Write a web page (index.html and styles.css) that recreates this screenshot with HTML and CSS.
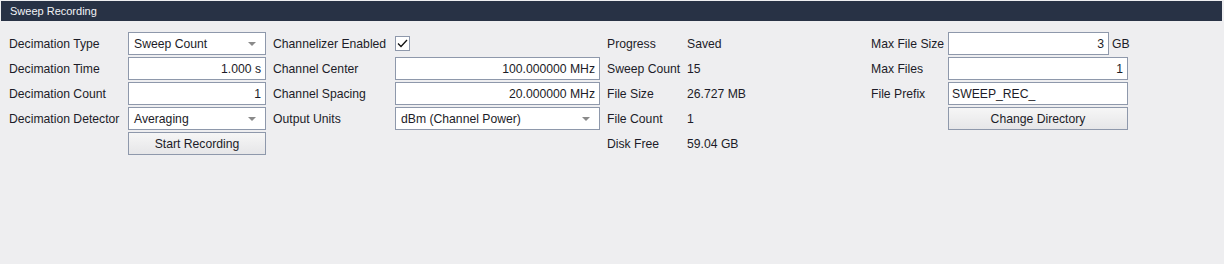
FILE: index.html
```html
<!DOCTYPE html>
<html>
<head>
<meta charset="utf-8">
<link rel="stylesheet" href="styles.css">
</head>
<body>
<div class="panel">
  <div class="titlebar">Sweep Recording</div>
  <div class="form">
    <div class="label">Decimation Type</div>
    <div class="combo"><span>Sweep Count</span><span class="arrow"></span></div>
    <div class="label l2">Channelizer Enabled</div>
    <div class="checkcell"><span class="check"><svg width="11" height="9" viewBox="0 0 11 9"><path d="M1 4.5 L4 7.5 L10 1" fill="none" stroke="#111" stroke-width="1.3"/></svg></span></div>
    <div class="label l2">Progress</div>
    <div class="value">Saved</div>
    <div class="label">Max File Size</div>
    <div class="withunit"><div class="field num">3</div><span class="unit">GB</span></div>

    <div class="label">Decimation Time</div>
    <div class="field num">1.000 s</div>
    <div class="label l2">Channel Center</div>
    <div class="field num">100.000000 MHz</div>
    <div class="label l2">Sweep Count</div>
    <div class="value">15</div>
    <div class="label">Max Files</div>
    <div class="field num">1</div>

    <div class="label">Decimation Count</div>
    <div class="field num">1</div>
    <div class="label l2">Channel Spacing</div>
    <div class="field num">20.000000 MHz</div>
    <div class="label l2">File Size</div>
    <div class="value">26.727 MB</div>
    <div class="label">File Prefix</div>
    <div class="field">SWEEP_REC_</div>

    <div class="label">Decimation Detector</div>
    <div class="combo"><span>Averaging</span><span class="arrow"></span></div>
    <div class="label l2">Output Units</div>
    <div class="combo"><span>dBm (Channel Power)</span><span class="arrow"></span></div>
    <div class="label l2">File Count</div>
    <div class="value">1</div>
    <div class="label"></div>
    <div class="button">Change Directory</div>

    <div class="label"></div>
    <div class="button">Start Recording</div>
    <div class="label l2"></div>
    <div></div>
    <div class="label l2">Disk Free</div>
    <div class="value">59.04 GB</div>
  </div>
</div>
</body>
</html>
```

FILE: styles.css
```css
* { box-sizing: border-box; }
html, body {
  margin: 0;
  padding: 0;
  background: #eeeef0;
}
body {
  width: 1224px;
  height: 264px;
  overflow: hidden;
  font-family: "Liberation Sans", Arial, sans-serif;
  font-size: 12.2px;
  color: #1c1c28;
}
.panel {
  padding: 1px 2px 0 1px;
}
.titlebar {
  height: 20px;
  background: #283245;
  color: #f2f2f6;
  font-size: 11px;
  line-height: 20px;
  padding-left: 9px;
}
.form {
  display: grid;
  grid-template-columns: 119px 138px 129px 205px 87px 184px 77px 180px;
  grid-auto-rows: 23px;
  row-gap: 2px;
  padding: 11px 0 0 8px;
}
.label {
  display: flex;
  align-items: center;
  white-space: nowrap;
}
.l2 { padding-left: 7px; }
.value {
  display: flex;
  align-items: center;
}
.field {
  height: 23px;
  background: #ffffff;
  border: 1px solid #8e98ab;
  display: flex;
  align-items: center;
  padding: 0 4px 0 3px;
  white-space: nowrap;
}
.field.num { justify-content: flex-end; }
.withunit {
  display: flex;
  align-items: center;
}
.withunit .field { flex: 1; }
.unit { padding-left: 3px; width: 19px; }
.combo {
  height: 23px;
  background: #ffffff;
  border: 1px solid #8e98ab;
  display: flex;
  align-items: center;
  justify-content: space-between;
  padding: 0 9px 0 5px;
}
.arrow {
  width: 0;
  height: 0;
  border-left: 4px solid transparent;
  border-right: 4px solid transparent;
  border-top: 4px solid #8a8a8a;
}
.checkcell {
  display: flex;
  align-items: center;
}
.check {
  width: 15px;
  height: 15px;
  border: 1px solid #8e98ab;
  background: #ffffff;
  display: flex;
  align-items: center;
  justify-content: center;
}
.button {
  height: 23px;
  border: 1px solid #8e98ab;
  background: linear-gradient(#f6f6f6, #e6e6e8);
  display: flex;
  align-items: center;
  justify-content: center;
}
```
